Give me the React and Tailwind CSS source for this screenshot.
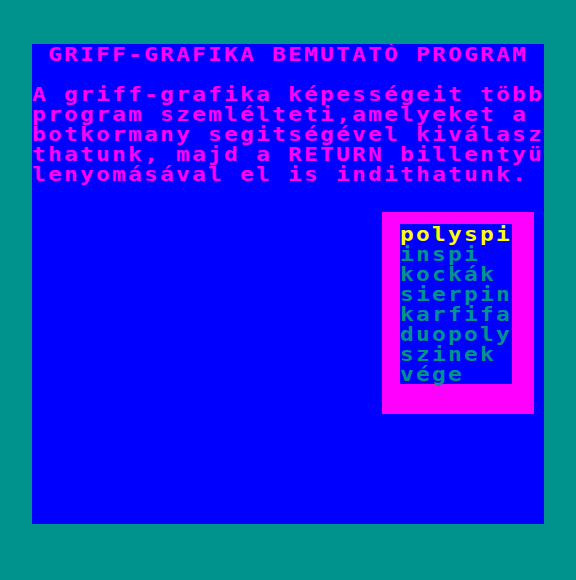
const lines = [
  "A griff-grafika képességeit több",
  "program szemlélteti,amelyeket a",
  "botkormany segitségével kiválasz",
  "thatunk, majd a RETURN billentyü",
  "lenyomásával el is indithatunk.",
];

const menu = ["polyspi", "inspi", "kockák", "sierpin", "karfifa", "duopoly", "szinek", "vége"];

// glyphs are drawn at 13.33px advance and stretched to a 16px cell
const row = "h-[20px] self-start origin-left scale-x-[1.2]";

export default function App() {
  return (
    <div className="w-[576px] h-[580px] bg-[#00938e] pt-[44px] pl-[32px] overflow-hidden">
      <div className="w-[512px] h-[480px] bg-[#0000ff] flex flex-col overflow-hidden font-['DejaVu_Sans_Mono',monospace] font-bold text-[19px] leading-[20px] tracking-[1.893px] whitespace-pre">
        <div className={`${row} text-[#ff00ff]`}>{" GRIFF-GRAFIKA BEMUTATÓ PROGRAM"}</div>
        <div className="h-[20px]" />
        {lines.map((l, i) => (
          <div key={i} className={`${row} text-[#ff00ff]`}>
            {l}
          </div>
        ))}
        {/* menu box */}
        <div className="mt-[28px] ml-[350px] w-[152px] h-[202px] bg-[#ff00ff] pt-[12px] pl-[18px]">
          <div className="w-[112px] h-[160px] bg-[#0000ff] flex flex-col">
            {menu.map((m, i) => (
              <div
                key={m}
                className={i === 0 ? `${row} text-[#ffff00]` : `${row} text-[#00938e]`}
              >
                {m}
              </div>
            ))}
          </div>
        </div>
      </div>
    </div>
  );
}
